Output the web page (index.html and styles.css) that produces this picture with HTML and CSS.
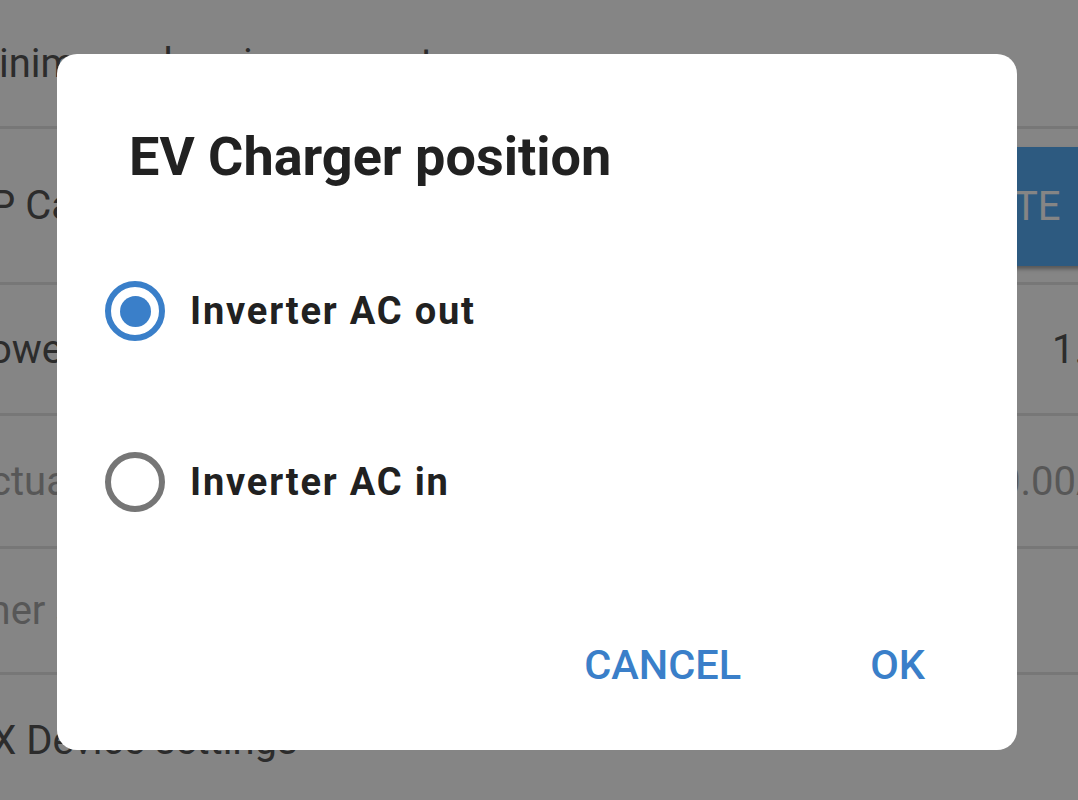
FILE: index.html
```html
<!DOCTYPE html>
<html>
<head>
<meta charset="utf-8">
<link rel="stylesheet" href="styles.css">
</head>
<body>
<div class="list">
  <div class="row row-1"><span class="label">Minimum charging current</span></div>
  <div class="row row-2"><span class="label">CP Calibration</span><span class="btn">UPDATE</span></div>
  <div class="row row-3"><span class="label">Power</span><span class="value v-power">1.4kW</span></div>
  <div class="row row-4"><span class="label muted">Actual charging current</span><span class="value muted v-actual">0.00A</span></div>
  <div class="row row-5"><span class="label muted">Other settings</span></div>
  <div class="row row-6"><span class="label">GX Device settings</span></div>
</div>

<div class="scrim">
  <div class="dialog">
    <h1 class="title">EV Charger position</h1>
    <div class="options">
      <div class="option">
        <span class="radio checked"><span class="dot"></span></span>
        <span class="opt-label">Inverter AC out</span>
      </div>
      <div class="option">
        <span class="radio"></span>
        <span class="opt-label">Inverter AC in</span>
      </div>
    </div>
    <div class="actions">
      <span class="action">CANCEL</span>
      <span class="action">OK</span>
    </div>
  </div>
</div>
</body>
</html>
```

FILE: styles.css
```css
html, body {
  margin: 0;
  padding: 0;
  width: 1078px;
  height: 800px;
  overflow: hidden;
  background: #ffffff;
  font-family: Roboto, "Liberation Sans", sans-serif;
}

.list {
  margin-left: -36px;
  width: 1240px;
}

.row {
  display: flex;
  align-items: center;
  border-bottom: 3px solid #e4e4e4;
  box-sizing: border-box;
  font-size: 40px;
  color: #555;
  white-space: nowrap;
}

.label { flex: 1; }

.row-1 { height: 129px; align-items: flex-start; padding-top: 40px; }
.row-2 { height: 156px; }
.row-3 { height: 131px; }
.row-4 { height: 133px; }
.row-5 { height: 126px; }
.row-5 .label { margin-left: -16px; }
.row-6 { height: 140px; border-bottom: none; align-items: flex-start; padding-top: 42px; }

.muted { color: #a8a8a8; }

.value {
  box-sizing: border-box;
}

.v-power { width: 152px; }
.v-actual { width: 206px; }

.btn {
  background: #56adf5;
  color: #fff;
  height: 119px;
  width: 220px;
  display: flex;
  align-items: center;
  justify-content: center;
  box-sizing: border-box;
  margin-right: 107px;
  margin-top: 2px;
  font-size: 40px;
  box-shadow: 0 3px 4px rgba(0,0,0,0.35);
}

.scrim {
  position: fixed;
  inset: 0;
  background: rgba(0, 0, 0, 0.478);
  display: flex;
  align-items: flex-start;
  justify-content: flex-start;
  padding: 54px 0 0 57px;
  box-sizing: border-box;
}

.dialog {
  width: 960px;
  height: 696px;
  background: #ffffff;
  border-radius: 20px;
  box-sizing: border-box;
  display: flex;
  flex-direction: column;
}

.title {
  margin: 0;
  padding: 71px 0 0 72px;
  font-size: 54px;
  line-height: 64px;
  font-weight: 700;
  color: #212121;
  height: 133px;
  box-sizing: border-box;
}

.options {
  display: flex;
  flex-direction: column;
  padding-left: 48px;
  margin-top: 94px;
  gap: 111px;
}

.option {
  display: flex;
  align-items: center;
  gap: 25px;
  height: 60px;
}

.radio {
  width: 60px;
  height: 60px;
  box-sizing: border-box;
  border: 6px solid #767676;
  border-radius: 50%;
  display: flex;
  align-items: center;
  justify-content: center;
  flex: none;
}

.radio.checked { border-color: #3a7fc9; }

.dot {
  width: 31px;
  height: 31px;
  border-radius: 50%;
  background: #3a7fc9;
}

.opt-label {
  font-size: 38px;
  letter-spacing: 1.8px;
  font-weight: 700;
  color: #212121;
}

.actions {
  display: flex;
  justify-content: flex-end;
  align-items: center;
  margin-top: auto;
  padding: 0 92px 55px 0;
  gap: 129px;
}

.action {
  font-size: 41.5px;
  font-weight: 500;
  color: #3a7fc9;
  line-height: 60px;
}
```
